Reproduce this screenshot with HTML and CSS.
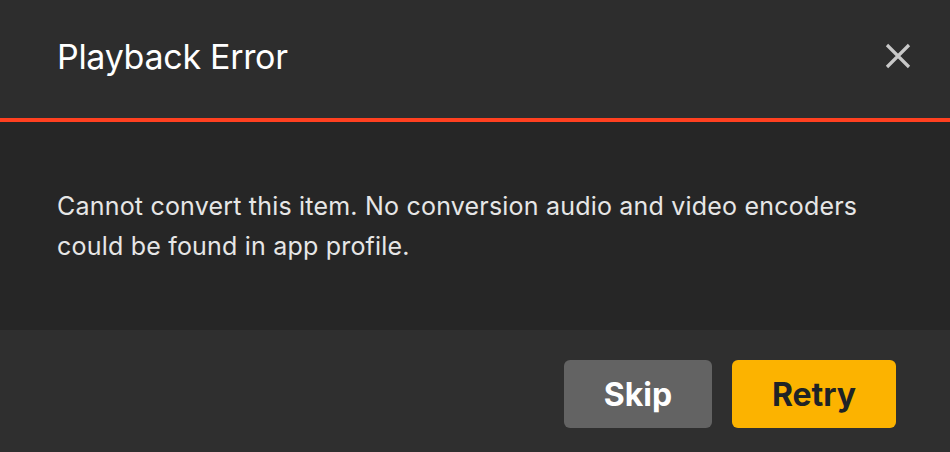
FILE: index.html
```html
<!DOCTYPE html>
<html lang="en">
<head>
    <meta charset="UTF-8">
    <meta name="viewport" content="width=device-width, initial-scale=1.0">
    <title>Playback Error</title>
    <link rel="stylesheet" href="styles.css">
</head>
<body>
    <div class="modal">
        <div class="modal-header">
            <h1 class="modal-title">Playback Error</h1>
            <button class="close-btn" aria-label="Close">
                <svg width="28" height="28" viewBox="0 0 28 28">
                    <path d="M3 3 L25 25 M25 3 L3 25" stroke="#c8c8c8" stroke-width="3.2" stroke-linecap="butt"/>
                </svg>
            </button>
        </div>
        <div class="modal-body">
            <p>Cannot convert this item. No conversion audio and video encoders could be found in app profile.</p>
        </div>
        <div class="modal-footer">
            <button class="btn btn-skip">Skip</button>
            <button class="btn btn-retry">Retry</button>
        </div>
    </div>
</body>
</html>
```

FILE: styles.css
```css
body {
    margin: 0;
    font-family: Inter, "Open Sans", sans-serif;
    background-color: #262626;
}
.modal {
    width: 950px;
    height: 452px;
    display: flex;
    flex-direction: column;
}
.modal-header {
    height: 122px;
    box-sizing: border-box;
    padding: 0 38px 0 57px;
    display: flex;
    align-items: center;
    justify-content: space-between;
    background-color: #2d2d2d;
    border-bottom: 4px solid #ff4020;
}
.modal-title {
    margin: 0 0 6px 0;
    font-size: 34px;
    font-weight: 400;
    color: #ffffff;
    letter-spacing: -0.3px;
}
.close-btn {
    background: none;
    border: none;
    padding: 0;
    margin-bottom: 6px;
    cursor: pointer;
    display: flex;
}
.modal-body {
    height: 208px;
    box-sizing: border-box;
    padding: 64px 57px 0 57px;
    background-color: #262626;
}
.modal-body p {
    margin: 0;
    font-size: 25px;
    line-height: 40px;
    letter-spacing: 0.2px;
    color: #e6e6e6;
    max-width: 830px;
}
.modal-footer {
    flex: 1;
    display: flex;
    justify-content: flex-end;
    align-items: flex-start;
    gap: 20px;
    padding: 30px 54px 0 0;
    background-color: #2f2f2f;
}
.btn {
    height: 68px;
    border: none;
    border-radius: 6px;
    font-family: Inter, "Open Sans", sans-serif;
    font-size: 32px;
    font-weight: 700;
    padding: 0;
    cursor: pointer;
}
.btn-skip {
    width: 148px;
    background-color: #636363;
    color: #ffffff;
}
.btn-retry {
    width: 164px;
    background-color: #fcb300;
    color: #1f2326;
}
```
